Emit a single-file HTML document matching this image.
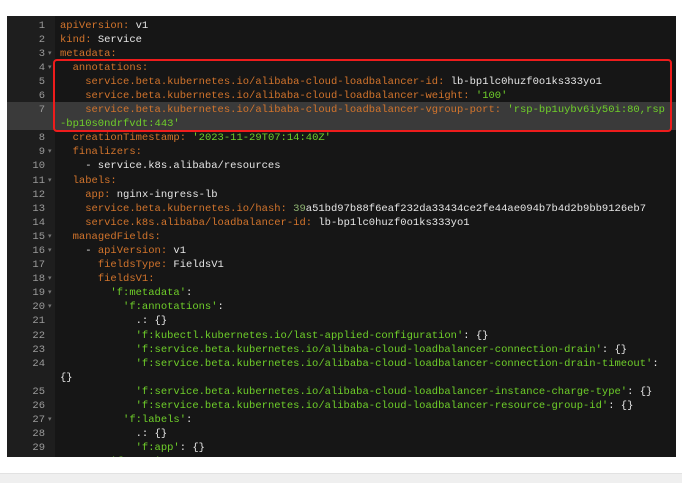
<!DOCTYPE html>
<html><head><meta charset="utf-8"><style>
body{margin:0;width:682px;height:482px;background:#fff;position:relative;overflow:hidden}
.box{position:absolute;left:7px;top:16px;width:669px;height:441px;background:#161616;overflow:hidden}
.gut{position:absolute;left:0;top:0;width:48px;height:100%;background:#1e1e1e}
.hl{position:absolute;left:0;width:669px;top:86px;height:28px;background:#3a3a3a}
.code{position:absolute;left:0;top:2.5px;font-family:"Liberation Mono",monospace;font-size:10.5px;line-height:14.1px;color:#e6e6e6}
.r{height:14.1px;position:relative;white-space:pre}
.n{position:absolute;left:0;width:38px;text-align:right;color:#9a9a9a}
.f{position:absolute;left:41px;color:#777;font-size:7px}
.t{position:absolute;left:53px}
.k{color:#d2742c}.s{color:#6fcf2a}.g{color:#8fb573}
.red{position:absolute;left:53px;top:59px;width:615px;height:69px;border:2.5px solid #ee1c1c;border-radius:4px}
.bot{position:absolute;left:0;top:473px;width:682px;height:9px;background:#efefef;border-top:1px solid #e2e2e2}
</style></head><body>
<div class="box"><div class="gut"></div><div class="hl"></div>
<div class="code"><div class="r"><span class="n">1</span><span class="t"><span class="k">apiVersion:</span> v1</span></div><div class="r"><span class="n">2</span><span class="t"><span class="k">kind:</span> Service</span></div><div class="r"><span class="n">3</span><span class="f">▾</span><span class="t"><span class="k">metadata:</span></span></div><div class="r"><span class="n">4</span><span class="f">▾</span><span class="t">  <span class="k">annotations:</span></span></div><div class="r"><span class="n">5</span><span class="t">    <span class="k">service.beta.kubernetes.io/alibaba-cloud-loadbalancer-id:</span> lb-bp1lc0huzf0o1ks333yo1</span></div><div class="r"><span class="n">6</span><span class="t">    <span class="k">service.beta.kubernetes.io/alibaba-cloud-loadbalancer-weight:</span> <span class="s">'100'</span></span></div><div class="r"><span class="n">7</span><span class="t">    <span class="k">service.beta.kubernetes.io/alibaba-cloud-loadbalancer-vgroup-port:</span> <span class="s">'rsp-bp1uybv6iy50i:80,rsp</span></span></div><div class="r"><span class="t"><span class="s">-bp10s0ndrfvdt:443'</span></span></div><div class="r"><span class="n">8</span><span class="t">  <span class="k">creationTimestamp:</span> <span class="s">'2023-11-29T07:14:40Z'</span></span></div><div class="r"><span class="n">9</span><span class="f">▾</span><span class="t">  <span class="k">finalizers:</span></span></div><div class="r"><span class="n">10</span><span class="t">    - service.k8s.alibaba/resources</span></div><div class="r"><span class="n">11</span><span class="f">▾</span><span class="t">  <span class="k">labels:</span></span></div><div class="r"><span class="n">12</span><span class="t">    <span class="k">app:</span> nginx-ingress-lb</span></div><div class="r"><span class="n">13</span><span class="t">    <span class="k">service.beta.kubernetes.io/hash:</span> <span class="g">39</span>a51bd97b88f6eaf232da33434ce2fe44ae094b7b4d2b9bb9126eb7</span></div><div class="r"><span class="n">14</span><span class="t">    <span class="k">service.k8s.alibaba/loadbalancer-id:</span> lb-bp1lc0huzf0o1ks333yo1</span></div><div class="r"><span class="n">15</span><span class="f">▾</span><span class="t">  <span class="k">managedFields:</span></span></div><div class="r"><span class="n">16</span><span class="f">▾</span><span class="t">    - <span class="k">apiVersion:</span> v1</span></div><div class="r"><span class="n">17</span><span class="t">      <span class="k">fieldsType:</span> FieldsV1</span></div><div class="r"><span class="n">18</span><span class="f">▾</span><span class="t">      <span class="k">fieldsV1:</span></span></div><div class="r"><span class="n">19</span><span class="f">▾</span><span class="t">        <span class="s">'f:metadata'</span>:</span></div><div class="r"><span class="n">20</span><span class="f">▾</span><span class="t">          <span class="s">'f:annotations'</span>:</span></div><div class="r"><span class="n">21</span><span class="t">            .: {}</span></div><div class="r"><span class="n">22</span><span class="t">            <span class="s">'f:kubectl.kubernetes.io/last-applied-configuration'</span>: {}</span></div><div class="r"><span class="n">23</span><span class="t">            <span class="s">'f:service.beta.kubernetes.io/alibaba-cloud-loadbalancer-connection-drain'</span>: {}</span></div><div class="r"><span class="n">24</span><span class="t">            <span class="s">'f:service.beta.kubernetes.io/alibaba-cloud-loadbalancer-connection-drain-timeout'</span>:</span></div><div class="r"><span class="t">{}</span></div><div class="r"><span class="n">25</span><span class="t">            <span class="s">'f:service.beta.kubernetes.io/alibaba-cloud-loadbalancer-instance-charge-type'</span>: {}</span></div><div class="r"><span class="n">26</span><span class="t">            <span class="s">'f:service.beta.kubernetes.io/alibaba-cloud-loadbalancer-resource-group-id'</span>: {}</span></div><div class="r"><span class="n">27</span><span class="f">▾</span><span class="t">          <span class="s">'f:labels'</span>:</span></div><div class="r"><span class="n">28</span><span class="t">            .: {}</span></div><div class="r"><span class="n">29</span><span class="t">            <span class="s">'f:app'</span>: {}</span></div><div class="r"><span class="n">30</span><span class="t">        <span class="s">'f:spec'</span>:</span></div></div>
</div>
<div class="red"></div>
<div class="bot"></div>
</body></html>
